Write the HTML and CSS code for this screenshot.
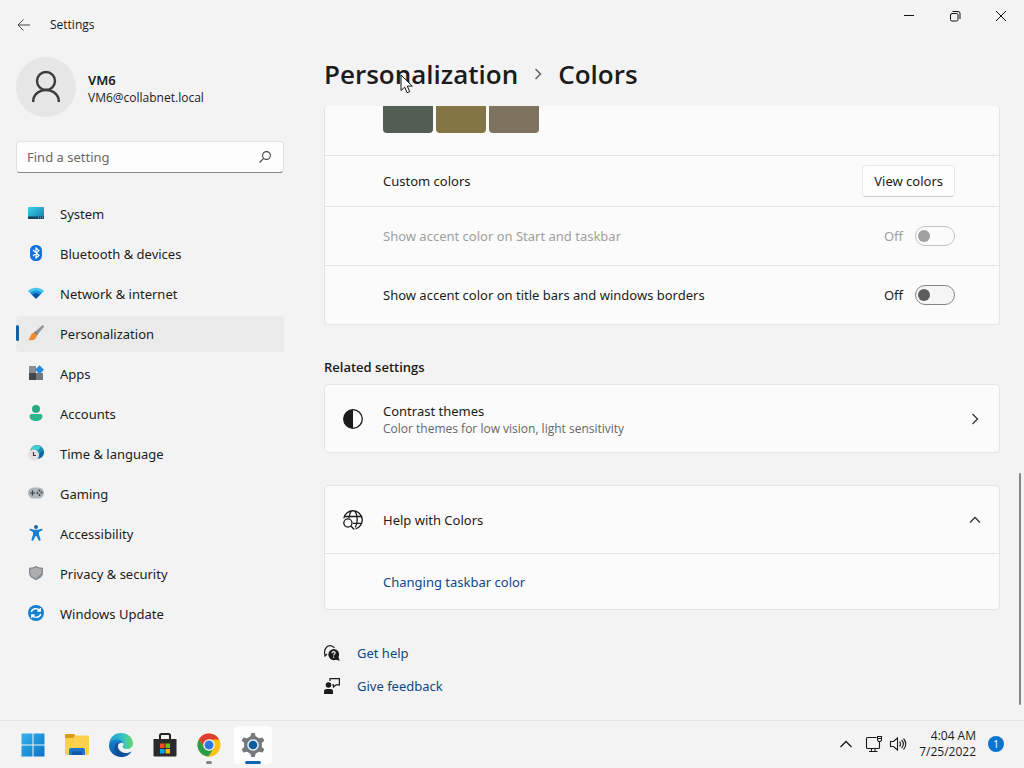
FILE: index.html
```html
<!DOCTYPE html>
<html lang="en">
<head>
    <meta charset="UTF-8">
    <meta name="viewport" content="width=device-width, initial-scale=1.0">
    <title>Settings</title>

    <link rel="stylesheet" href="styles.css">
</head>
<body>
<div class="window">
    <aside class="sidebar">
        <div class="titlebar">
            <button class="back" aria-label="Back">
                <svg width="14" height="14" viewBox="0 0 14 14" fill="none" stroke="#444"><path d="M13 7H1M6.500 1.500L1 7l5.500 5.500"/></svg>
            </button>
            <span>Settings</span>
        </div>

        <div class="account">
            <div class="avatar">
                <svg width="30" height="34" viewBox="0 0 30 34" fill="none" stroke="#3c3c3c" stroke-width="2.400"><circle cx="15" cy="11" r="9"/><path d="M2.200 32v-1c0-6 5.500-11 12.800-11s12.800 5 12.800 11v1"/></svg>
            </div>
            <div class="account-text">
                <div class="account-name">VM6</div>
                <div class="account-mail">VM6@collabnet.local</div>
            </div>
        </div>

        <div class="search">
            <input type="text" id="search" aria-label="Find a setting" placeholder="Find a setting">
            <label for="search">
                <svg width="14" height="14" viewBox="0 0 14 14" fill="none" stroke="#444" stroke-width="1.100"><circle cx="8.500" cy="5.500" r="3.900"/><path d="M5.700 8.300L1.500 12.500"/></svg>
            </label>
        </div>

        <nav class="nav">
            <a href="#">
                <svg width="16" height="16" viewBox="0 0 16 16">
                    <defs><linearGradient id="sys" x1="0" y1="0" x2="1" y2="1"><stop stop-color="#3fd0ea"/><stop offset="1" stop-color="#0f7fa8"/></linearGradient></defs>
                    <rect y="2" width="16" height="12" rx="1" fill="url(#sys)"/><path d="M0 11.500h16V13a1 1 0 0 1-1 1H1a1 1 0 0 1-1-1z" fill="#12425f"/><path d="M10 12.700h1M12 12.700h1M14 12.700h1" stroke="#9bc"/>
                </svg>
                System
            </a>
            <a href="#">
                <svg width="16" height="16" viewBox="0 0 16 16"><rect x="2" width="12" height="16" rx="5.500" fill="#0f74e0"/><path d="M5 5l6 5.500L8 13V3l3 2.500L5 11" fill="none" stroke="#fff" stroke-width="1.200"/></svg>
                Bluetooth &amp; devices
            </a>
            <a href="#">
                <svg width="16" height="16" viewBox="0 0 16 16"><path d="M.3 5.600C4.500 1.700 11.500 1.700 15.700 5.600q.4.400 0 .8L14 8H2L.3 6.400q-.4-.4 0-.8z" fill="#48c4ee"/><path d="M2 8c3.500-3.500 8.500-3.500 12 0l-2 2H4z" fill="#1992dc"/><path d="M4 10c2.400-2.400 5.600-2.400 8 0l-3.500 3.600q-.5.4-1 0z" fill="#0b51a8"/></svg>
                Network &amp; internet
            </a>
            <a href="#" class="active">
                <svg width="16" height="16" viewBox="0 0 16 16"><path d="M6 7.500L14 .6c1-.8 2.400.5 1.600 1.600L8.800 10.500z" fill="#8d969e"/><path d="M6 7.500l1.200-1 2.700 2.700-1.100 1.300z" fill="#626a70"/><path d="M6 7.500c1.600.2 2.700 1.400 2.800 3C8.500 14.500 4 16.500.3 14.700 2.700 13.500 2 8.200 6 7.500z" fill="#ed8b32"/></svg>
                Personalization
            </a>
            <a href="#">
                <svg width="16" height="16" viewBox="0 0 16 16"><rect x="1" y="1" width="7" height="7" fill="#8b8e90"/><rect x="1" y="8" width="7" height="7" fill="#45484b"/><rect x="8" y="8" width="7" height="7" fill="#74787b"/><path d="M11.500.2L16 4.700l-4.500 4.500L7 4.700z" fill="#268bdc"/></svg>
                Apps
            </a>
            <a href="#">
                <svg width="16" height="16" viewBox="0 0 16 16"><circle cx="8" cy="4" r="4" fill="#2aaa83"/><path d="M3.500 9h9a2 2 0 0 1 2 2c0 3-2.700 5-6.500 5s-6.500-2-6.500-5a2 2 0 0 1 2-2z" fill="#2bb48d"/></svg>
                Accounts
            </a>
            <a href="#">
                <svg width="16" height="16" viewBox="0 0 16 16"><circle cx="9" cy="7" r="7" fill="#168fae"/><path d="M3 3.500C6-.5 11-.5 13 2.500L9 6 4 5z" fill="#47cbd0"/><path d="M12 8l3.500-3c1 4-.5 7-4.500 8.500z" fill="#1167a5"/><circle cx="5.500" cy="10" r="5.500" fill="#e6e0e2"/><path d="M5.500 7v3.500H8" fill="none" stroke="#334" stroke-width="1.100"/></svg>
                Time &amp; language
            </a>
            <a href="#">
                <svg width="16" height="16" viewBox="0 0 16 16"><rect y="2.500" width="16" height="11" rx="5.500" fill="#aeb6bb"/><path d="M2 8h5M4.500 5.500v5" stroke="#3c4246" stroke-width="1.200"/><g fill="#3c4246"><circle cx="11.500" cy="5.500" r="1"/><circle cx="9.500" cy="8" r="1"/><circle cx="13.500" cy="7.500" r="1"/><circle cx="11.500" cy="10" r="1"/></g></svg>
                Gaming
            </a>
            <a href="#">
                <svg width="16" height="16" viewBox="0 0 16 16"><circle cx="8" cy="2" r="2" fill="#2166a0"/><path d="M2.800 3.700L6 4.800h4l3.200-1.100c1.200-.4 1.800 1.400.7 1.900L11 7v2.500l1.500 4.800c.3 1.500-1.500 2.100-2.100.8L8.500 11h-1l-1.900 4.100c-.6 1.300-2.400.7-2.100-.8L5 9.500V7L2.100 5.600c-1.100-.5-.5-2.300.7-1.900z" fill="#1680d2"/></svg>
                Accessibility
            </a>
            <a href="#">
                <svg width="16" height="16" viewBox="0 0 16 16"><path d="M8 .8c2 1.400 4.200 1.900 7 2V8c0 3.200-3 5.600-7 7.200C4 13.600 1 11.200 1 8V2.800c2.800-.1 5-.6 7-2z" fill="#85898d"/><path d="M8 2.200c1.600 1 3.500 1.500 5.700 1.700V8L8 13.800C4.600 12.400 2.300 10.400 2.300 8V3.900C4.500 3.700 6.400 3.200 8 2.200z" fill="#aaaeb1"/></svg>
                Privacy &amp; security
            </a>
            <a href="#">
                <svg width="16" height="16" viewBox="0 0 16 16"><circle cx="8" cy="8" r="8" fill="#1581d2"/><path d="M3.300 7c.8-3.500 6-4.700 8.600-1.500M12.700 9c-.8 3.500-6 4.700-8.600 1.500M12.300 3v3H9.200M3.700 13v-3h3.100" fill="none" stroke="#fff" stroke-width="1.300"/></svg>
                Windows Update
            </a>
        </nav>
    </aside>

    <main class="main">
        <div class="window-buttons">
            <button aria-label="Minimize"><svg width="12" height="12" viewBox="0 0 12 12" stroke="#111"><path d="M1 5.500h10"/></svg></button>
            <button aria-label="Restore"><svg width="12" height="12" viewBox="0 0 12 12" fill="none" stroke="#111"><rect x="1.500" y="3.500" width="7.500" height="7.500" rx="1.500"/><path d="M3.500 1.500H9a2 2 0 0 1 2 2V9"/></svg></button>
            <button aria-label="Close"><svg width="12" height="12" viewBox="0 0 12 12" stroke="#111"><path d="M1 1l10 10M11 1L1 11"/></svg></button>
        </div>

        <h1 class="breadcrumb">
            <span>Personalization</span>
            <svg width="10" height="14" viewBox="0 0 10 14" fill="none" stroke="#666" stroke-width="1.600"><path d="M2.500 2L7.500 7l-5 5"/></svg>
            <span>Colors</span>
        </h1>

        <section class="card card-colors">
            <div class="row swatches">
                <button class="swatch slate" aria-label="Camouflage desert"></button>
                <button class="swatch olive" aria-label="Camouflage"></button>
                <button class="swatch taupe" aria-label="Storm"></button>
            </div>
            <div class="row row-custom">
                <span>Custom colors</span>
                <button class="view-colors">View colors</button>
            </div>
            <div class="row row-toggle disabled">
                <label for="accent-taskbar">Show accent color on Start and taskbar</label>
                <span class="state">Off</span>
                <input type="checkbox" class="toggle" id="accent-taskbar" disabled>
            </div>
            <div class="row row-toggle">
                <label for="accent-title">Show accent color on title bars and windows borders</label>
                <span class="state">Off</span>
                <input type="checkbox" class="toggle" id="accent-title">
            </div>
        </section>

        <h2>Related settings</h2>
        <a href="#" class="card expander">
            <svg width="20" height="20" viewBox="0 0 20 20"><circle cx="10" cy="10" r="9.300" fill="none" stroke="#1b1b1b" stroke-width="1.300"/><path d="M10 .7a9.300 9.300 0 0 0 0 18.600z" fill="#1b1b1b"/></svg>
            <span class="expander-text">
                Contrast themes
                <small>Color themes for low vision, light sensitivity</small>
            </span>
            <svg width="12" height="12" viewBox="0 0 12 12" fill="none" stroke="#333" stroke-width="1.300"><path d="M3.500 1l5 5-5 5"/></svg>
        </a>

        <section class="card card-help">
            <button class="expander">
                <svg width="20" height="20" viewBox="0 0 20 20" fill="none" stroke="#1b1b1b" stroke-width="1.300">
                    <path d="M.8 8.300A9.300 9.300 0 1 1 12.500 19M1.500 6.500h17M10 13.300h8.500M6 8C6.500 3.500 8.300.7 10 .7c4.500 0 5.500 12 2.200 16.800"/>
                    <circle cx="4.900" cy="13" r="4.100"/><path d="M7.900 16l3.300 3.500"/>
                </svg>
                <span class="expander-text">Help with Colors</span>
                <svg width="12" height="12" viewBox="0 0 12 12" fill="none" stroke="#333" stroke-width="1.300"><path d="M1 8.500l5-5 5 5"/></svg>
            </button>
            <div class="row row-link"><a href="#">Changing taskbar color</a></div>
        </section>

        <div class="links">
            <a href="#">
                <svg width="16" height="16" viewBox="0 0 16 16"><path d="M1 10.500C-.5 4.500 2.500.7 6 .7c2 0 3.500.8 4.500 2.300M.5 11.500L3 9" fill="none" stroke="#1b1b1b" stroke-width="1.200"/><path d="M9.500 4a5.600 5.600 0 0 1 5 8.200l1.300 3.600-3.800-1A5.600 5.600 0 1 1 9.500 4z" fill="#1b1b1b"/><path d="M8 8.200c0-2.200 3.200-2 3.200-.2 0 1.200-1.600 1.200-1.600 2.600M9.600 11.500v1.200" fill="none" stroke="#fff" stroke-width="1.100"/></svg>
                Get help
            </a>
            <a href="#">
                <svg width="16" height="16" viewBox="0 0 16 16"><circle cx="4.500" cy="7" r="2.800" fill="#1b1b1b"/><path d="M0 16v-2.500A2.500 2.500 0 0 1 2.500 11h4A2.500 2.500 0 0 1 9 13.500V16z" fill="#1b1b1b"/><path d="M6 3V.6h9.400v6.200h-3.200L9.500 9V6.800H8.300" fill="none" stroke="#1b1b1b" stroke-width="1.200"/></svg>
                Give feedback
            </a>
        </div>

        <div class="scroll-thumb"></div>
        <svg class="pointer" width="14" height="20" viewBox="0 0 14 20"><path d="M1 1v15.500l3.700-3.400 2.400 5.600 2.600-1.100-2.400-5.500h5z" fill="#fff" stroke="#111"/></svg>
    </main>
</div>

<footer class="taskbar">
    <div class="apps">
        <button aria-label="Start">
            <svg width="24" height="24" viewBox="0 0 24 24">
                <defs><linearGradient id="win" x1="0" y1="0" x2="1" y2="1"><stop stop-color="#35b5ee"/><stop offset="1" stop-color="#0872c8"/></linearGradient></defs>
                <path d="M.5.5h11v11H.500zM12.500.5h11v11h-11zM.5 12.500h11v11H.500zM12.500 12.500h11v11h-11z" fill="url(#win)"/>
            </svg>
        </button>
        <button aria-label="File Explorer">
            <svg width="24" height="24" viewBox="0 0 24 24"><path d="M0 2a1 1 0 0 1 1-1h8l2 2.500V7H0z" fill="#d79b16"/><path d="M0 5h8l2.500-2.500H23a1 1 0 0 1 1 1V21a1 1 0 0 1-1 1H1a1 1 0 0 1-1-1z" fill="#fcd04c"/><path d="M4 22v-5a2 2 0 0 1 2-2h12a2 2 0 0 1 2 2v5z" fill="#1b75c9"/><path d="M7 18.500h10V22H7z" fill="#1459a3"/></svg>
        </button>
        <button aria-label="Microsoft Edge">
            <svg width="24" height="24" viewBox="0 0 24 24">
                <defs>
                    <linearGradient id="edge-a" x1="0" y1="0" x2="1" y2="0"><stop stop-color="#1b9bdc"/><stop offset=".6" stop-color="#36c5c0"/><stop offset="1" stop-color="#67d865"/></linearGradient>
                    <linearGradient id="edge-b" x1="0" y1="0" x2="0" y2="1"><stop stop-color="#1687d4"/><stop offset="1" stop-color="#0d4f9d"/></linearGradient>
                </defs>
                <path d="M0 11.500C.5 4.500 5.500 0 12 0s12 4.700 12 10.400c0 3.400-2.500 5.700-6 5.700-2.700 0-4.500-1-4.500-2 0-.8 1-1.100 1-3 0-2-2-4-5.500-4C4.500 7.100 1 9 0 11.500z" fill="url(#edge-a)"/>
                <path d="M0 12c.4-3.500 4-5.600 8.500-5.600 3.800 0 6 2.200 6 4.600-1-2-4.500-1.500-5.500 1.500-1.300 4 3 8.500 9 7.500 2-.3 3.500-1.400 4.500-1.600C20.500 22 16.500 24 12 24 5 24-.3 18.500 0 12z" fill="url(#edge-b)"/>
                <path d="M5.500 15c0-3 1.500-5.500 4.500-6-3 4 .5 11.500 8 11-3 2.800-12.500 3-12.500-5z" fill="#0d4288" opacity=".6"/>
            </svg>
        </button>
        <button aria-label="Microsoft Store">
            <svg width="24" height="24" viewBox="0 0 24 24"><path d="M7 7V2.500A1.500 1.500 0 0 1 8.500 1h7A1.500 1.500 0 0 1 17 2.500V7" fill="none" stroke="#222" stroke-width="2"/><path d="M.5 6h23v16.500a1 1 0 0 1-1 1h-21a1 1 0 0 1-1-1z" fill="#2b2b2b"/><path d="M7 10.500h4.500V15H7z" fill="#ef5024"/><path d="M12.500 10.500H17V15h-4.500z" fill="#7fba00"/><path d="M7 16h4.500v4.500H7z" fill="#00a3ee"/><path d="M12.500 16H17v4.500h-4.500z" fill="#ffb900"/></svg>
        </button>
        <button class="running" aria-label="Google Chrome">
            <svg width="24" height="24" viewBox="0 0 24 24"><circle cx="12" cy="12" r="11.500" fill="#fbc116"/><path d="M12 6.500H22.100A11.500 11.500 0 0 0 2 6.300l5.200 8.500A5.500 5.500 0 0 1 12 6.500z" fill="#e13c30"/><path d="M2 6.300A11.500 11.500 0 0 0 11.500 23.500l5.300-8.800a5.500 5.500 0 0 1-9.600 0z" fill="#289e4b"/><circle cx="12" cy="12" r="5.700" fill="#fff"/><circle cx="12" cy="12" r="4.500" fill="#2e75e6"/></svg>
        </button>
        <button class="running current" aria-label="Settings">
            <svg width="24" height="24" viewBox="0 0 24 24"><g fill="#75797c"><circle cx="12" cy="12" r="9"/><path id="tooth" d="M9.500 5.500l1-5h3l1 5z" stroke="#75797c" stroke-linejoin="round"/><use href="#tooth" transform="rotate(60 12 12)"/><use href="#tooth" transform="rotate(120 12 12)"/><use href="#tooth" transform="rotate(180 12 12)"/><use href="#tooth" transform="rotate(240 12 12)"/><use href="#tooth" transform="rotate(300 12 12)"/></g><circle cx="12" cy="12" r="5.800" fill="#e9f2f8"/><circle cx="12" cy="12" r="4.300" fill="#0e5c9e"/></svg>
        </button>
    </div>

    <div class="tray">
        <button aria-label="Show hidden icons"><svg width="14" height="14" viewBox="0 0 14 14" fill="none" stroke="#1b1b1b" stroke-width="1.300"><path d="M1.500 10L7 4.500l5.500 5.500"/></svg></button>
        <button class="status" aria-label="Network and volume">
            <svg width="18" height="18" viewBox="0 0 18 18" fill="none" stroke="#1b1b1b" stroke-width="1.100"><path d="M11.500 2.500h-9a1 1 0 0 0-1 1v9a1 1 0 0 0 1 1h11a1 1 0 0 0 1-1V7M6.500 13.500v3M10 13.500v3M4 16.500h8.500M12.500 1.500h4V5l-1 1.500h-2l-1-1.500zM12.500 3.500h4"/></svg>
            <svg width="18" height="18" viewBox="0 0 18 18" fill="none" stroke="#1b1b1b" stroke-width="1.100"><path d="M1.500 6.500h3L8.500 3v12l-4-3.500h-3zM10.500 6.500c1.300 1.500 1.300 3.500 0 5M12.500 5c2.300 2.400 2.300 5.600 0 8M14.500 3.500c3 3.200 3 7.800 0 11"/></svg>
        </button>
        <button class="clock">4:04 AM<br>7/25/2022</button>
        <button class="badge" aria-label="1 notification">1</button>
    </div>
</footer>
</body>
</html>
```
FILE: styles.css
```css
* {
    box-sizing: border-box;
}
body {
    margin: 0;
    min-height: 100vh;
    display: flex;
    flex-direction: column;
    font-family: "Noto Sans", "Open Sans", sans-serif;
    font-size: 13px;
    line-height: 20px;
    background-color: #f3f3f3;
    color: #1b1b1b;
}
button {
    padding: 0;
    border: none;
    background: none;
    font: inherit;
    color: inherit;
}
a {
    color: #0f4687;
    text-decoration: none;
}
svg {
    display: block;
    flex-shrink: 0;
}

.window {
    flex: 1;
    display: flex;
}

/* sidebar */
.sidebar {
    width: 300px;
    flex-shrink: 0;
    padding: 0 16px;
}
.titlebar {
    display: flex;
    align-items: center;
    gap: 19px;
    height: 49px;
    font-family: "Open Sans", sans-serif;
    font-size: 12px;
}
.back {
    padding-left: 1px;
}
.account {
    display: flex;
    align-items: center;
    gap: 12px;
    margin-top: 8px;
    line-height: 18px;
}
.avatar {
    display: flex;
    align-items: center;
    justify-content: center;
    width: 60px;
    height: 60px;
    border-radius: 50%;
    background-color: #e6e6e6;
}
.account-text {
    padding-top: 3px;
}
.account-name {
    font-weight: 600;
}
.account-mail {
    font-family: "Open Sans", sans-serif;
    font-size: 12px;
}
.search {
    display: flex;
    align-items: center;
    height: 32px;
    margin-top: 24px;
    padding: 0 11px 0 10px;
    border: 1px solid #e3e3e3;
    border-bottom-color: #868686;
    border-radius: 4px;
    background-color: #fdfdfd;
}
.search input {
    flex: 1;
    min-width: 0;
    padding: 0;
    border: none;
    outline: none;
    background: none;
    font: inherit;
}
.search input::placeholder {
    color: #6a6a6a;
}
.nav {
    display: flex;
    flex-direction: column;
    gap: 4px;
    margin-top: 23px;
}
.nav a {
    display: flex;
    align-items: center;
    gap: 16px;
    height: 36px;
    padding-left: 12px;
    border-radius: 4px;
    color: #1b1b1b;
}
.nav svg {
    margin-bottom: 2px;
}
.nav .active {
    position: relative;
    background-color: #eaeaea;
}
.nav .active::before {
    content: "";
    position: absolute;
    left: 0;
    top: 9px;
    width: 3px;
    height: 16px;
    border-radius: 2px;
    background-color: #0f5fa8;
}

/* main */
.main {
    position: relative;
    flex: 1;
    padding: 0 24px 24px;
}
.window-buttons {
    display: flex;
    justify-content: flex-end;
    margin-right: -24px;
}
.window-buttons button {
    display: flex;
    align-items: center;
    justify-content: center;
    width: 46px;
    height: 32px;
}
.breadcrumb {
    display: flex;
    align-items: center;
    gap: 15px;
    margin: 24px 0 14px;
    font-family: "Open Sans", sans-serif;
    font-size: 26px;
    font-weight: 600;
    line-height: 36px;
}
h2 {
    margin: 32px 0 7px;
    font-family: "Open Sans", sans-serif;
    font-size: 13px;
    font-weight: 600;
    line-height: 20px;
}
.card {
    border: 1px solid #e5e5e5;
    border-radius: 4px;
    background-color: #fbfbfb;
}
.row {
    display: flex;
    align-items: center;
    padding: 0 44px 0 58px;
}
.row + .row,
.row-link {
    border-top: 1px solid #e5e5e5;
}
.card-colors {
    border-top: none;
}
.swatches {
    align-items: flex-start;
    gap: 3px;
    height: 49px;
}
.swatch {
    width: 50px;
    height: 27px;
    border-radius: 0 0 4px 4px;
}
.slate {
    background-color: #525e54;
}
.olive {
    background-color: #847545;
}
.taupe {
    background-color: #7e735f;
}
.row-custom {
    justify-content: space-between;
    height: 51px;
}
.view-colors {
    height: 32px;
    padding: 0 11px;
    border: 1px solid #e9e9e9;
    border-bottom-color: #cccccc;
    border-radius: 4px;
    background-color: #fefefe;
}
.row-toggle {
    height: 59px;
}
.row-toggle label {
    flex: 1;
}
.disabled {
    color: #a0a0a0;
}
.toggle {
    appearance: none;
    width: 40px;
    height: 20px;
    margin: 0 0 0 12px;
    padding: 3px 2px;
    border: 1px solid #868686;
    border-radius: 10px;
    background-color: #f5f5f5;
}
.toggle::before {
    content: "";
    display: block;
    width: 12px;
    height: 12px;
    border-radius: 50%;
    background-color: #5d5d5d;
}
.toggle:checked::before {
    margin-left: auto;
}
.toggle:disabled {
    border-color: #c3c3c3;
    background-color: #fbfbfb;
}
.toggle:disabled::before {
    background-color: #9f9f9f;
}
.expander {
    display: flex;
    align-items: center;
    gap: 20px;
    width: 100%;
    height: 69px;
    padding: 0 18px;
    text-align: left;
    color: #1b1b1b;
}
.expander-text {
    flex: 1;
}
.expander-text small {
    display: block;
    font-family: "Open Sans", sans-serif;
    font-size: 12px;
    line-height: 16px;
    color: #666666;
}
.card-help {
    margin-top: 32px;
}
.card-help .expander {
    height: 67px;
}
.row-link {
    height: 56px;
}
.links {
    display: flex;
    flex-direction: column;
    align-items: flex-start;
    gap: 13px;
    margin-top: 33px;
}
.links a {
    display: flex;
    align-items: center;
    gap: 17px;
}
.scroll-thumb {
    position: absolute;
    right: 3px;
    bottom: 15px;
    width: 2px;
    height: 232px;
    border-radius: 1px;
    background-color: #868686;
}
.pointer {
    position: absolute;
    left: 100px;
    top: 74px;
}

/* taskbar */
.taskbar {
    display: flex;
    justify-content: space-between;
    height: 48px;
    padding: 0 20px 0 14px;
    border-top: 1px solid #e4e4e4;
    background-color: #f3f3f3;
}
.apps,
.tray {
    display: flex;
    align-items: center;
}
.apps {
    gap: 6px;
}
.apps button {
    position: relative;
    display: flex;
    align-items: center;
    justify-content: center;
    width: 38px;
    height: 38px;
    border-radius: 4px;
}
.running::after {
    content: "";
    position: absolute;
    bottom: 0;
    width: 6px;
    height: 3px;
    border-radius: 2px;
    background-color: #868686;
}
.apps .current {
    background-color: #fdfdfd;
}
.current::after {
    width: 16px;
    background-color: #0f67b1;
}
.tray {
    gap: 12px;
    padding-bottom: 2px;
}
.status {
    display: flex;
    gap: 6px;
}
.clock {
    font-family: "Open Sans", sans-serif;
    font-size: 12px;
    line-height: 16px;
    text-align: right;
}
.badge {
    width: 16px;
    height: 16px;
    border-radius: 50%;
    background-color: #0a74d0;
    font-size: 10px;
    line-height: 16px;
    color: white;
}
```
